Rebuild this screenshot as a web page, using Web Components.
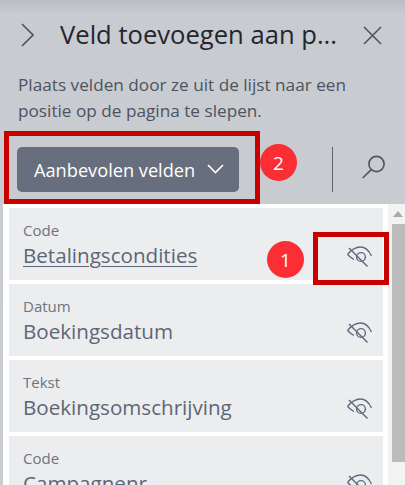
<!doctype html>
<html><head><meta charset="utf-8">
<style>
html,body{margin:0;padding:0;height:100%;overflow:hidden;background:#c9ccd1}
body{font-family:"Open Sans","Noto Sans",sans-serif}
</style></head><body>
<field-pane>
  <pane-header slot="header">Veld toevoegen aan p...</pane-header>
  <span slot="desc">Plaats velden door ze uit de lijst naar een<br>positie op de pagina te slepen.</span>
  <pane-toolbar slot="toolbar">Aanbevolen velden</pane-toolbar>
  <field-row kind="Code" name="Betalingscondities" link></field-row>
  <field-row kind="Datum" name="Boekingsdatum"></field-row>
  <field-row kind="Tekst" name="Boekingsomschrijving"></field-row>
  <field-row kind="Code" name="Campagnenr"></field-row>
  <note-box slot="over" style="left:4px;top:131px;width:256px;height:73px"></note-box>
  <note-box slot="over" style="left:313px;top:232px;width:76px;height:53px"></note-box>
  <note-badge slot="over" style="left:260px;top:144px">2</note-badge>
  <note-badge slot="over" style="left:267px;top:241px">1</note-badge>
</field-pane>
<script>
function def(name,html,init){
  customElements.define(name,class extends HTMLElement{
    constructor(){super();this.attachShadow({mode:'open'}).innerHTML=html;}
    connectedCallback(){if(init)init(this);}
  });
}
def('field-pane',`<style>
:host{display:flex;flex-direction:column;width:405px;height:485px;overflow:hidden;position:relative;background:linear-gradient(#b9bcc1 0,#c8cbd0 14px,#c9ccd1 100%);color:#2b2f38}
.desc{padding:0 18px;margin-top:2px;font-size:17.2px;line-height:25.5px;color:#4d535f;height:66px;flex:none}
.list{flex:none;height:281px;margin-left:3px;background:#fff;display:flex;overflow:hidden}
.rows{flex:none;width:385px;padding:4px 0 0 6px;box-sizing:border-box;display:flex;flex-direction:column;gap:4px}
.sb{flex:1;display:flex;flex-direction:column;background:#f3f3f3}
.up{height:20px;flex:none;display:flex;justify-content:center;padding:7px 0 0 3px;box-sizing:border-box}
.thumb{height:238px;background:#bcbcbc;flex:none;margin-left:4px}
</style>
<slot name="header"></slot>
<div class="desc"><slot name="desc"></slot></div>
<slot name="toolbar"></slot>
<div class="list"><div class="rows"><slot></slot></div>
<div class="sb"><div class="up"><svg width="10" height="6"><path d="M5 0L10 6H0Z" fill="#a8a8a8"/></svg></div><div class="thumb"></div></div></div>
<slot name="over"></slot>`);
def('pane-header',`<style>
:host{display:flex;align-items:center;height:70px;flex:none;box-sizing:border-box;padding:0 0 0 21px;color:#23262e}
svg{flex:none;fill:none;stroke:#4f5560;stroke-width:1.6}
.t{font-size:25.6px;white-space:nowrap;margin-left:26px;width:303px;line-height:70px}
</style>
<svg width="13" height="24" viewBox="0 0 13 24"><path d="M1 1l11 11L1 23"/></svg>
<span class="t"><slot></slot></span>
<svg width="19" height="19" viewBox="0 0 19 19"><path d="M1 1l17 17M18 1L1 18"/></svg>`);
def('pane-toolbar',`<style>
:host{display:flex;align-items:flex-start;flex:none;height:45px;margin:9px 0 0 17px;padding-bottom:12px}
.btn{flex:none;box-sizing:border-box;width:222px;height:45px;border-radius:5px;background:#676f7e;color:#fff;display:flex;align-items:center;padding-left:17px;font-size:18.2px;font-weight:500;white-space:nowrap}
.btn svg{margin-left:12px;margin-top:-2px}
.div{width:1.5px;height:45px;background:#5c626d;margin-left:92.5px;flex:none}
.s{margin-left:29px;margin-top:8px}
svg{fill:none;stroke-width:1.6}
</style>
<div class="btn"><span><slot></slot></span><svg width="17" height="10" viewBox="0 0 17 10" stroke="#fff"><path d="M1 1l7.5 7.5L16 1"/></svg></div>
<div class="div"></div>
<svg class="s" width="25" height="25" viewBox="0 0 25 25" stroke="#4f5560"><circle cx="14.5" cy="9" r="7.6"/><path d="M9.3 14.7L0.7 23"/></svg>`);
def('field-row',`<style>
:host{display:flex;align-items:center;box-sizing:border-box;flex:none;height:72px;width:374px;background:#ecedef;padding:0 11px 0 14px;font-family:"Open Sans","Noto Sans",sans-serif}
.c{flex:1;min-width:0;padding-top:2px}
.k{font-size:15px;line-height:20px;color:#6d7480;margin-top:-1px}
.n{font-size:20.6px;line-height:29px;color:#5d6675;white-space:nowrap;margin-top:1px}
.n.l{text-decoration:underline;text-underline-offset:3px;text-decoration-thickness:1px}
svg{flex:none;fill:none;stroke:#5f6b7d;stroke-width:1.4;margin-top:24px}
</style>
<div class="c"><div class="k"></div><div class="n"></div></div>
<svg width="25" height="21" viewBox="0 0 25 21"><path d="M0.5 8.5C5 3 9 1 13.5 1S21.5 3.5 24.5 10"/><path d="M0.5 8.5C2.5 10.5 4.5 12 7 13.5"/><circle cx="14" cy="11" r="4.4"/><path d="M2 2L20.5 20.5"/></svg>`,
el=>{const s=el.shadowRoot;s.querySelector('.k').textContent=el.getAttribute('kind');const n=s.querySelector('.n');n.textContent=el.getAttribute('name');if(el.hasAttribute('link'))n.classList.add('l');});
def('note-box',`<style>:host{position:absolute;display:block;box-sizing:border-box;border:5px solid #c80000}</style>`);
def('note-badge',`<style>:host{position:absolute;display:flex;align-items:center;justify-content:center;width:37px;height:37px;border-radius:50%;background:#fb2d35;color:#fff;font-size:19px;font-family:"Open Sans",sans-serif;font-weight:500}</style><slot></slot>`);
</script>
</body></html>
